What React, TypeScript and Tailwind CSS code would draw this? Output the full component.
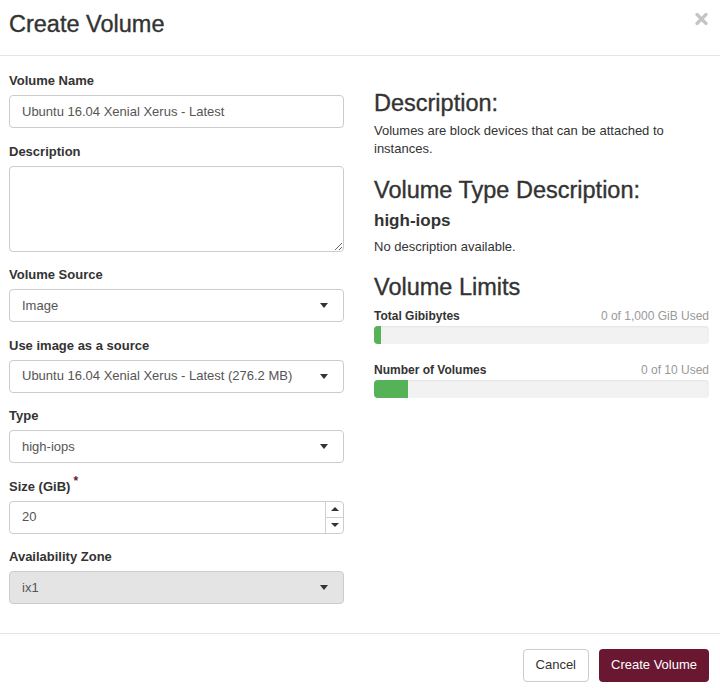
import React from "react";

const Caret = () => (
  <svg width="8" height="5" viewBox="0 0 8 5" className="shrink-0">
    <path d="M0 0h8L4 5z" fill="#333" />
  </svg>
);

const Label = ({ children }: { children: React.ReactNode }) => (
  <div className="text-[13px] leading-[18px] font-bold text-[#333] mb-[5px]">{children}</div>
);

const Select = ({ value, disabled }: { value: string; disabled?: boolean }) => (
  <div
    className={`h-[33px] border border-[#ccc] rounded-[4px] flex items-center justify-between pl-[12px] pr-[15px] text-[13px] text-[#555] ${
      disabled ? "bg-[#e4e4e4]" : "bg-white"
    }`}
  >
    <span>{value}</span>
    <Caret />
  </div>
);

const Group = ({ children }: { children: React.ReactNode }) => <div className="mb-[14.5px]">{children}</div>;

const Bar = ({ label, used, pct }: { label: string; used: string; pct: number }) => (
  <div>
    <div className="flex justify-between items-center leading-[18px]">
      <span className="text-[12px] font-bold text-[#333]">{label}</span>
      <span className="text-[12px] text-[#999]">{used}</span>
    </div>
    <div className="mt-[1px] h-[18px] rounded-[4px] bg-[#f2f2f2] overflow-hidden shadow-[inset_0_1px_2px_rgba(0,0,0,0.06)]">
      <div className="h-full bg-[#56b257]" style={{ width: `${pct}%` }} />
    </div>
  </div>
);

const H3 = ({ children, className }: { children: React.ReactNode; className: string }) => (
  <h3 className={`text-[23.5px] leading-[26px] text-[#333] [-webkit-text-stroke:0.35px_#333] ${className}`}>{children}</h3>
);

export default function App() {
  return (
    <div className="w-[720px] h-[688px] overflow-hidden bg-white font-['Liberation_Sans',Arial,sans-serif] text-[#333]">
      {/* header */}
      <div className="h-[56px] border-b border-[#e5e5e5] flex items-center justify-between pl-[9px] pr-[12px]">
        <H3 className="-mt-[7px]">Create Volume</H3>
        <svg width="13" height="12" viewBox="0 0 13 12" className="-mt-[18px]">
          <path d="M2 1.5l9 9M11 1.5l-9 9" stroke="#c4c4c4" strokeWidth="3.2" strokeLinecap="round" />
        </svg>
      </div>

      {/* body */}
      <div className="grid grid-cols-2 gap-[30px] pl-[9px] pr-[11px] pt-[16px] pb-[14px]">
        <div>
          <Group>
            <Label>Volume Name</Label>
            <div className="h-[33px] border border-[#ccc] rounded-[4px] flex items-center pl-[12px] text-[13px] text-[#555]">
              Ubuntu 16.04 Xenial Xerus - Latest
            </div>
          </Group>
          <Group>
            <Label>Description</Label>
            <textarea className="block w-full h-[86px] border border-[#ccc] rounded-[4px] resize-y outline-none" />
          </Group>
          <Group>
            <Label>Volume Source</Label>
            <Select value="Image" />
          </Group>
          <Group>
            <Label>Use image as a source</Label>
            <Select value="Ubuntu 16.04 Xenial Xerus - Latest (276.2 MB)" />
          </Group>
          <Group>
            <Label>Type</Label>
            <Select value="high-iops" />
          </Group>
          <Group>
            <Label>
              <span>Size (GiB)</span>
              <span className="relative -top-[6px] ml-[3px] text-[12px] text-[#6b1632]">*</span>
            </Label>
            <div className="h-[33px] border border-[#ccc] rounded-[4px] flex items-stretch text-[13px] text-[#555]">
              <div className="flex-1 flex items-center pl-[12px]">20</div>
              <div className="w-[18px] border-l border-[#d0d0d0] flex flex-col">
                <div className="flex-1 flex items-center justify-center border-b border-[#d0d0d0]">
                  <svg width="8" height="4" viewBox="0 0 8 4">
                    <path d="M0 4h8L4 0z" fill="#333" />
                  </svg>
                </div>
                <div className="flex-1 flex items-center justify-center">
                  <svg width="8" height="4" viewBox="0 0 8 4">
                    <path d="M0 0h8L4 4z" fill="#333" />
                  </svg>
                </div>
              </div>
            </div>
          </Group>
          <Group>
            <Label>Availability Zone</Label>
            <Select value="ix1" disabled />
          </Group>
        </div>

        <div>
          <H3 className="mt-[18px]">Description:</H3>
          <p className="mt-[6px] text-[13px] leading-[18px] text-[#333]">
            Volumes are block devices that can be attached to instances.
          </p>
          <H3 className="mt-[19px]">Volume Type Description:</H3>
          <div className="mt-[8px] text-[17px] leading-[20px] font-bold text-[#333]">high-iops</div>
          <p className="mt-[7px] text-[13px] leading-[18px] text-[#333]">No description available.</p>
          <H3 className="mt-[18px]">Volume Limits</H3>
          <div className="mt-[7px]">
            <Bar label="Total Gibibytes" used="0 of 1,000 GiB Used" pct={2} />
          </div>
          <div className="mt-[17px]">
            <Bar label="Number of Volumes" used="0 of 10 Used" pct={10} />
          </div>
        </div>
      </div>

      {/* footer */}
      <div className="border-t border-[#e5e5e5] flex justify-end gap-[10px] pt-[15px] pr-[11px]">
        <button className="h-[33px] px-[12px] border border-[#ccc] rounded-[4px] bg-white text-[13px] text-[#333]">
          Cancel
        </button>
        <button className="h-[33px] px-[12px] rounded-[4px] bg-[#6a1732] text-[13px] text-white">
          Create Volume
        </button>
      </div>
    </div>
  );
}
